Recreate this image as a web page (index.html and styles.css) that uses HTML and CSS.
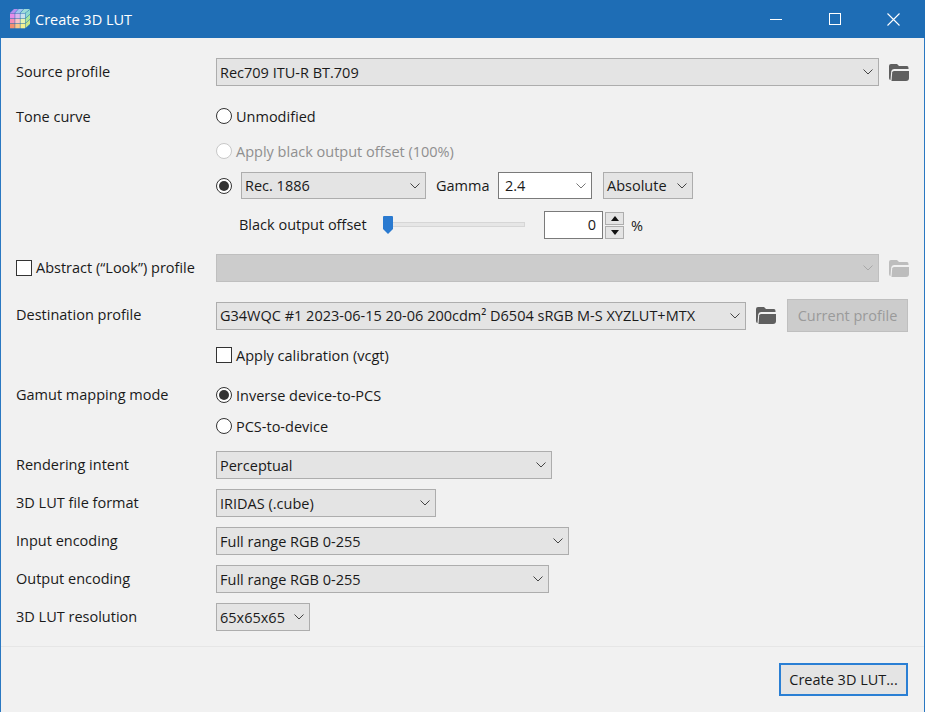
FILE: index.html
```html
<!DOCTYPE html>
<html lang="en">
<head>
<meta charset="utf-8">
<title>Create 3D LUT</title>
<link rel="stylesheet" href="styles.css">
</head>
<body>
<svg class="defs" width="0" height="0" aria-hidden="true">
  <defs>
    <symbol id="chev" viewBox="0 0 10 6"><path d="M.5.500 5 5 9.500.500" fill="none" stroke="currentColor" stroke-width="1"/></symbol>
    <symbol id="folder" viewBox="0 0 20 17">
      <path d="M0 2Q0 0 2 0H8L10 2H18Q19.500 2 19.500 4V5H5Q2.500 5 2.200 7.500L1.500 16Q0 16 0 14Z" fill="currentColor"/>
      <path d="M5 7H20V14Q20 17 17 17H2.500L3.200 8.500Q3.400 7 5 7Z" fill="currentColor"/>
    </symbol>
  </defs>
</svg>
<div class="window">
  <header class="titlebar">
    <svg class="app-icon" width="20" height="20" viewBox="0 0 20 20" aria-hidden="true">
      <path d="M0 4 4 0H8.200L4.500 4Z" fill="#b28fef"/><path d="M5 4 8.700 0H13.400L10 4Z" fill="#a0c4ef"/><path d="M10.500 4 13.900 0H20L15 4Z" fill="#9ddcd8"/>
      <path d="M15.500 4 20 .5V5L15.500 9Z" fill="#8fdad0"/><path d="M15.500 9.500 20 5.500V10L15.500 14Z" fill="#a8e6a0"/><path d="M15.500 14.500 20 10.500V15L15.500 19Z" fill="#c8e88a"/>
      <rect x="0" y="4.500" width="4.700" height="4.600" fill="#e78be8"/><rect x="5.200" y="4.500" width="4.700" height="4.600" fill="#dbb5ee"/><rect x="10.400" y="4.500" width="4.700" height="4.600" fill="#c9e2ee"/>
      <rect x="0" y="9.600" width="4.700" height="4.600" fill="#f58fb5"/><rect x="5.200" y="9.600" width="4.700" height="4.600" fill="#fac3c5"/><rect x="10.400" y="9.600" width="4.700" height="4.600" fill="#e8f3b0"/>
      <rect x="0" y="14.700" width="4.700" height="4.600" fill="#f29070"/><rect x="5.200" y="14.700" width="4.700" height="4.600" fill="#f8c68a"/><rect x="10.400" y="14.700" width="4.700" height="4.600" fill="#f4f090"/>
    </svg>
    <span class="title">Create 3D LUT</span>
    <div class="winctl">
      <span class="ctl"><span class="min"></span></span>
      <span class="ctl"><span class="max"></span></span>
      <span class="ctl"><svg width="13" height="13" viewBox="0 0 13 13" aria-hidden="true"><path d="M.5.500 12.500 12.500M12.500.500.500 12.500" stroke="#fff" stroke-width="1.100" fill="none"/></svg></span>
    </div>
  </header>

  <main class="content">
    <div class="row r-source">
      <label class="lab">Source profile</label>
      <div class="sel grow">Rec709 ITU-R BT.709<svg class="chev"><use href="#chev"/></svg></div>
      <svg class="folder"><use href="#folder"/></svg>
    </div>

    <div class="row r-tone">
      <label class="lab flat">Tone curve</label>
      <span class="radio"></span><span class="rtext">Unmodified</span>
    </div>
    <div class="row r-apply">
      <span class="lab"></span>
      <span class="radio disabled"></span><span class="rtext muted">Apply black output offset (100%)</span>
    </div>
    <div class="row r-rec">
      <span class="lab"></span>
      <span class="radio on"></span>
      <div class="sel short w-rec">Rec. 1886<svg class="chev"><use href="#chev"/></svg></div>
      <span class="gamma">Gamma</span>
      <div class="sel short white w-gamma">2.4<svg class="chev"><use href="#chev"/></svg></div>
      <div class="sel short w-abs">Absolute<svg class="chev"><use href="#chev"/></svg></div>
    </div>
    <div class="row r-offset">
      <span class="lab"></span>
      <span class="offlabel">Black output offset</span>
      <div class="slider">
        <span class="track"></span>
        <svg class="thumb" width="10" height="18" viewBox="0 0 10 18" aria-hidden="true"><path d="M0 1Q0 0 1 0H9Q10 0 10 1V13L5 18 0 13Z" fill="#2a7ad0"/></svg>
      </div>
      <div class="numbox">0</div>
      <div class="spin">
        <span class="spinbtn"><svg width="8" height="5" viewBox="0 0 8 5" aria-hidden="true"><path d="M4 0 8 5H0Z" fill="#111"/></svg></span>
        <span class="spinbtn"><svg width="8" height="5" viewBox="0 0 8 5" aria-hidden="true"><path d="M0 0H8L4 5Z" fill="#111"/></svg></span>
      </div>
      <span class="pct">%</span>
    </div>

    <div class="row r-abstract">
      <span class="lab check-lab"><span class="check"></span><span class="chk-text">Abstract (“Look”) profile</span></span>
      <div class="sel grow disabled"><svg class="chev"><use href="#chev"/></svg></div>
      <svg class="folder faded"><use href="#folder"/></svg>
    </div>

    <div class="row r-dest">
      <label class="lab">Destination profile</label>
      <div class="sel w-dest">G34WQC #1 2023-06-15 20-06 200cdm² D6504 sRGB M-S XYZLUT+MTX<svg class="chev"><use href="#chev"/></svg></div>
      <svg class="folder"><use href="#folder"/></svg>
      <button class="curbtn" disabled>Current profile</button>
    </div>
    <div class="row r-calib">
      <span class="lab"></span>
      <span class="check"></span><span class="rtext">Apply calibration (vcgt)</span>
    </div>

    <div class="row r-gamut">
      <label class="lab">Gamut mapping mode</label>
      <span class="radio on"></span><span class="rtext">Inverse device-to-PCS</span>
    </div>
    <div class="row r-pcs">
      <span class="lab"></span>
      <span class="radio"></span><span class="rtext">PCS-to-device</span>
    </div>

    <div class="row r-render">
      <label class="lab">Rendering intent</label>
      <div class="sel w-render">Perceptual<svg class="chev"><use href="#chev"/></svg></div>
    </div>
    <div class="row r-std">
      <label class="lab">3D LUT file format</label>
      <div class="sel w-format">IRIDAS (.cube)<svg class="chev"><use href="#chev"/></svg></div>
    </div>
    <div class="row r-std">
      <label class="lab">Input encoding</label>
      <div class="sel w-input">Full range RGB 0-255<svg class="chev"><use href="#chev"/></svg></div>
    </div>
    <div class="row r-std">
      <label class="lab">Output encoding</label>
      <div class="sel w-output">Full range RGB 0-255<svg class="chev"><use href="#chev"/></svg></div>
    </div>
    <div class="row r-std">
      <label class="lab">3D LUT resolution</label>
      <div class="sel w-res">65x65x65<svg class="chev"><use href="#chev"/></svg></div>
    </div>
  </main>

  <footer class="footer">
    <button class="primary">Create 3D LUT...</button>
  </footer>
</div>
</body>
</html>
```
FILE: styles.css
```css
* { box-sizing: border-box; }
html, body { margin: 0; padding: 0; }
body {
  width: 925px;
  height: 712px;
  overflow: hidden;
  font-family: "Open Sans", "Noto Sans", sans-serif;
  font-size: 14.5px;
  color: #1a1a1a;
  background: #f1f1f1;
}
.defs { position: absolute; }
.window {
  width: 925px;
  height: 712px;
  display: flex;
  flex-direction: column;
  border-left: 1px solid #2a78c2;
  border-right: 1px solid #2a78c2;
}
.titlebar {
  height: 38px;
  margin: 0 -1px;
  flex: none;
  background: #1e6db5;
  color: #fff;
  display: flex;
  align-items: center;
  padding-left: 10px;
}
.app-icon { flex: none; filter: blur(.3px); }
.title { margin-left: 5px; }
.winctl { margin-left: auto; display: flex; height: 100%; padding-right: 2px; }
.ctl { width: 59px; display: flex; align-items: center; justify-content: center; }
.min { display: block; width: 12px; height: 1px; background: #fff; }
.max { display: block; width: 12px; height: 12px; border: 1px solid #fff; }

.content { flex: none; padding: 20px 15px 0 15px; height: 609px; border-bottom: 1px solid #e6e6e6; }
.row { display: flex; align-items: center; }
.lab { flex: none; width: 200px; white-space: nowrap; padding-bottom: 2px; }
.lab.flat { padding-bottom: 0; }
.check-lab { display: flex; align-items: center; padding-bottom: 0; }
.chk-text { margin-left: 4px; padding-bottom: 2px; }

.sel {
  height: 28px;
  position: relative;
  display: flex;
  align-items: center;
  flex: none;
  padding-left: 3px;
  background: #e4e4e4;
  border: 1px solid #adadad;
  white-space: nowrap;
}
.sel.grow { width: 663px; }
.sel.short { height: 27px; }
.sel.white { background: #fff; border-color: #7a7a7a; padding-left: 6px; }
.sel.disabled { background: #ccc; border-color: #bfbfbf; color: #a0a0a0; }
.chev { position: absolute; right: 5px; top: 50%; margin-top: -3px; width: 10px; height: 6px; color: #444; }
.sel.white .chev { color: #777; }
.sel.disabled .chev { color: #a8a8a8; }

.folder { flex: none; width: 20px; height: 17px; margin-left: 10px; color: #5f5f5f; }
.folder.faded { color: #bdbdbd; }

.radio {
  flex: none;
  width: 16px;
  height: 16px;
  border-radius: 50%;
  border: 1px solid #333;
  background: #fff;
  position: relative;
}
.radio.disabled { border-color: #c8c8c8; }
.radio.on::after {
  content: "";
  position: absolute;
  left: 2px;
  top: 2px;
  width: 10px;
  height: 10px;
  border-radius: 50%;
  background: #333;
}
.rtext { margin-left: 4px; white-space: nowrap; }
.muted { color: #8f8f8f; }
.check { flex: none; width: 16px; height: 16px; background: #fff; border: 1px solid #333; }

.r-source { height: 28px; }
.r-tone { margin-top: 17px; height: 26px; }
.r-apply { margin-top: 9px; height: 26px; }
.r-rec { margin-top: 8px; height: 27px; }
.w-rec { width: 185px; margin-left: 9px; }
.gamma { margin-left: 10px; width: 52px; flex: none; white-space: nowrap; }
.w-gamma { width: 94px; margin-left: 10px; }
.w-abs { width: 90px; margin-left: 11px; }

.r-offset { margin-top: 12px; height: 28px; }
.offlabel { margin-left: 23px; width: 144px; white-space: nowrap; padding-bottom: 2px; }
.slider { position: relative; width: 142px; height: 18px; flex: none; }
.track { position: absolute; left: 0; right: 0; top: 6px; height: 5px; background: #e6e6e6; border: 1px solid #d6d6d6; }
.thumb { position: absolute; left: 0; top: 0; }
.numbox {
  width: 59px;
  height: 28px;
  margin-left: 19px;
  flex: none;
  background: #fff;
  border: 1px solid #7a7a7a;
  text-align: right;
  line-height: 26px;
  padding-right: 6px;
}
.spin { flex: none; margin-left: 2px; display: flex; flex-direction: column; gap: 1px; }
.spinbtn {
  width: 19px;
  height: 13px;
  background: #e4e4e4;
  border: 1px solid #adadad;
  display: flex;
  align-items: center;
  justify-content: center;
}
.pct { margin-left: 7px; }

.r-abstract { margin-top: 15px; height: 28px; }
.r-dest { margin-top: 17px; height: 33px; }
.w-dest { width: 530px; }
.curbtn {
  flex: none;
  width: 121px;
  height: 33px;
  margin-left: 11px;
  padding: 0;
  font: inherit;
  color: #9a9a9a;
  background: #ccc;
  border: 1px solid #bfbfbf;
}
.r-calib { margin-top: 10px; height: 26px; }
.r-gamut { margin-top: 14px; height: 26px; }
.r-pcs { margin-top: 5px; height: 26px; }
.r-render { margin-top: 12px; height: 28px; }
.r-std { margin-top: 10px; height: 28px; }
.w-render { width: 336px; }
.w-format { width: 220px; }
.w-input { width: 353px; }
.w-output { width: 333px; }
.w-res { width: 94px; }

.footer { flex: 1; display: flex; justify-content: flex-end; align-items: flex-start; padding: 16px 16px 0 0; }
.primary {
  width: 129px;
  height: 33px;
  padding: 0;
  font: inherit;
  color: #1a1a1a;
  background: #e4e4e4;
  border: 2px solid #2a7fd4;
}
```
